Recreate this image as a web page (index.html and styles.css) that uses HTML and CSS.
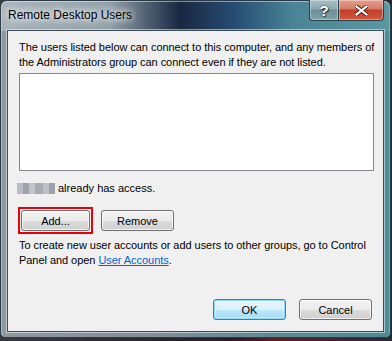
FILE: index.html
```html
<!DOCTYPE html>
<html lang="en">
<head>
    <meta charset="UTF-8">
    <title>Remote Desktop Users</title>
    <link rel="stylesheet" href="styles.css">
</head>
<body>
    <div class="window">
        <div class="titlebar">
            <span class="title">Remote Desktop Users</span>
            <div class="caption-btns">
                <button class="cap help">?</button>
                <button class="cap close">
                    <svg width="13" height="11" viewBox="0 0 13 11">
                        <path d="M1.5 1.5 L11.5 9.5 M11.5 1.5 L1.5 9.5" stroke="#4a1d16" stroke-width="4" stroke-linecap="square"/>
                        <path d="M1.5 1.5 L11.5 9.5 M11.5 1.5 L1.5 9.5" stroke="#ffffff" stroke-width="2.2" stroke-linecap="square"/>
                    </svg>
                </button>
            </div>
        </div>
        <div class="client">
            <p class="intro">The users listed below can connect to this computer, and any members of<br>the Administrators group can connect even if they are not listed.</p>
            <div class="listbox"></div>
            <p class="access"><span class="blurred"></span> already has access.</p>
            <div class="row">
                <span class="highlight"><button class="btn">Add...</button></span>
                <button class="btn">Remove</button>
            </div>
            <p class="info">To create new user accounts or add users to other groups, go to Control<br>Panel and open <a href="#">User Accounts</a>.</p>
            <div class="footer">
                <button class="btn default">OK</button>
                <button class="btn">Cancel</button>
            </div>
        </div>
    </div>
</body>
</html>
```

FILE: styles.css
```css
* {
    box-sizing: border-box;
    margin: 0;
    padding: 0;
}

body {
    width: 392px;
    height: 341px;
    background: linear-gradient(90deg, #3a3a42, #2a1a1e 60%, #5a2024 70%, #2a2a30);
    font-family: 'Liberation Sans', Arial, sans-serif;
    font-size: 11px;
    color: #000;
    overflow: hidden;
}

.window {
    width: 391px;
    height: 338px;
    border: 1px solid #2b3a44;
    border-radius: 7px 7px 5px 5px;
    padding: 0 6px 5px 6px;
    display: flex;
    flex-direction: column;
    background:
        linear-gradient(90deg, rgba(170,182,190,0.9) 0%, rgba(150,165,175,0.7) 28%, rgba(20,34,60,0.95) 46%, rgba(30,70,110,0.9) 60%, rgba(70,130,150,0.8) 75%, rgba(100,160,170,0.6) 100%) top / 100% 30px no-repeat,
        linear-gradient(90deg, #8e9aa2 0%, #7f8f97 40%, #5b8b95 70%, #4a8c95 100%);
    box-shadow: inset 0 1px 0 rgba(255,255,255,0.45), inset 1px 0 0 rgba(255,255,255,0.3), inset -1px 0 0 rgba(255,255,255,0.25);
}

.titlebar {
    height: 29px;
    display: flex;
    align-items: flex-start;
}

.title {
    margin: 7px 0 0 1px;
    font-size: 12px;
    color: #000;
    text-shadow: 0 0 6px #fff, 0 0 10px rgba(255,255,255,0.9), 0 0 14px rgba(255,255,255,0.7);
}

.caption-btns {
    margin-left: auto;
    display: flex;
    margin-top: -1px;
}

.cap {
    height: 21px;
    border: 1px solid #27404c;
    border-top: none;
    font-family: 'Liberation Sans', Arial, sans-serif;
    font-weight: bold;
    color: #fff;
    display: flex;
    align-items: center;
    justify-content: center;
}

.help {
    width: 29px;
    border-right: none;
    border-radius: 0 0 0 4px;
    font-size: 15px;
    text-shadow: 0 0 2px #223, 1px 1px 1px #334;
    background: linear-gradient(180deg, #a6c0c6 0%, #8eaab2 45%, #6d8f98 50%, #7fa2aa 100%);
    box-shadow: inset 0 0 0 1px rgba(255,255,255,0.35);
}

.close {
    width: 46px;
    border-radius: 0 0 4px 0;
    background: linear-gradient(180deg, #e3a08f 0%, #d47a66 45%, #bf3e27 50%, #d25a3e 100%);
    box-shadow: inset 0 0 0 1px rgba(255,255,255,0.35);
}

.client {
    flex: 1;
    background: #f0f0f0;
    border: 1px solid #3b4a54;
    box-shadow: 0 0 0 1px rgba(255,255,255,0.5);
    padding: 9px 10px 0 11px;
    display: flex;
    flex-direction: column;
    line-height: 15px;
}

.intro,
.info {
    white-space: nowrap;
    letter-spacing: -0.05px;
}

.listbox {
    margin-top: 3px;
    width: 355px;
    height: 98px;
    background: #fff;
    border: 1px solid #828790;
}

.access {
    margin-top: 10px;
    margin-left: -2px;
    display: flex;
    align-items: center;
    gap: 3px;
}

.blurred {
    display: inline-block;
    width: 38px;
    height: 11px;
    background: linear-gradient(90deg, #b9bcc4 0 6px, #9fa3ad 6px 12px, #c2c4ca 12px 18px, #a6aab2 18px 26px, #bcbfc6 26px 32px, #9ea2ab 32px 38px);
    filter: blur(0.6px);
}

.row {
    margin-top: 11px;
    display: flex;
    align-items: center;
    gap: 8px;
    margin-left: -1px;
}

.highlight {
    border: 2px solid #e8000b;
    padding: 1px;
    display: flex;
}

.btn {
    width: 73px;
    height: 21px;
    font-family: 'Liberation Sans', Arial, sans-serif;
    font-size: 11px;
    color: #000;
    border: 1px solid #707070;
    border-radius: 3px;
    background: linear-gradient(180deg, #f2f2f2 0%, #ebebeb 50%, #dddddd 51%, #cfcfcf 100%);
    box-shadow: inset 0 0 0 1px rgba(255,255,255,0.7);
}

.highlight .btn {
    width: 69px;
}

.info {
    margin-top: 4px;
}

.info a {
    color: #0066cc;
}

.footer {
    margin-top: auto;
    margin-bottom: 11px;
    display: flex;
    justify-content: flex-end;
    gap: 13px;
    margin-right: 1px;
}

.btn.default {
    border-color: #3c7fb1;
    box-shadow: inset 0 0 0 1px #8fd8f8, inset 0 0 0 2px rgba(255,255,255,0.4);
    background: linear-gradient(180deg, #eaf6fd 0%, #d9f0fc 50%, #bee6fd 51%, #a7d9f5 100%);
}
```
